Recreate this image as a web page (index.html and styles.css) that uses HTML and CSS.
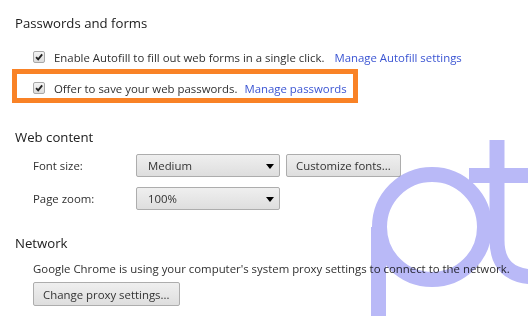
FILE: index.html
```html
<!DOCTYPE html>
<html lang="en">
<head>
<meta charset="UTF-8" />
<title>Settings</title>
<link rel="stylesheet" href="styles.css">
</head>
<body>
<div class="settings">
  <h3>Passwords and forms</h3>
  <div class="group checks">
    <div class="check-row">
      <span class="checkbox"><svg viewBox="0 0 12 12"><path d="M2.5 6.2 L5 8.8 L9.8 2.8" /></svg></span>
      <span>Enable Autofill to fill out web forms in a single click.</span>
      <a class="wide" href="#">Manage Autofill settings</a>
    </div>
    <div class="check-row marked">
      <span class="checkbox"><svg viewBox="0 0 12 12"><path d="M2.5 6.2 L5 8.8 L9.8 2.8" /></svg></span>
      <span>Offer to save your web passwords.</span>
      <a href="#">Manage passwords</a>
    </div>
  </div>

  <h3>Web content</h3>
  <div class="group fields">
    <div class="field-row">
      <label>Font size:</label>
      <div class="select">Medium<span class="arrow"></span></div>
      <button>Customize fonts...</button>
    </div>
    <div class="field-row">
      <label>Page zoom:</label>
      <div class="select">100%<span class="arrow"></span></div>
    </div>
  </div>

  <h3>Network</h3>
  <div class="group network">
    <p>Google Chrome is using your computer's system proxy settings to connect to the network.</p>
    <button>Change proxy settings...</button>
  </div>
</div>

<svg class="watermark" width="528" height="316" viewBox="0 0 528 316">
  <circle cx="432" cy="227" r="52.5" />
  <path d="M378.5 227 V330" />
  <path d="M497 140 V240 Q497 277 536 277" />
  <path d="M469 175.5 H540" />
</svg>
</body>
</html>
```

FILE: styles.css
```css
body {
  margin: 0;
  padding: 12px 0 0 15px;
  font-family: 'Open Sans', sans-serif;
  font-size: 11.4px;
  color: #303030;
  background-color: #fff;
  overflow: hidden;
}

h3 {
  margin: 0;
  font-size: 13.2px;
  font-weight: normal;
  line-height: 22px;
  color: #202020;
}

.group {
  padding-left: 18px;
}

.checks {
  margin: 11px 0 23px;
}

.fields {
  margin: 6px 0 22px;
}

.network {
  margin: 4px 0 0;
}

.check-row {
  display: flex;
  align-items: center;
  height: 24px;
  white-space: nowrap;
}

.check-row a {
  margin-left: 7px;
}

.check-row a.wide {
  margin-left: 10px;
}

a {
  color: #3b55d3;
  text-decoration: none;
}

.marked {
  width: fit-content;
  margin: 0 0 0 -21px;
  padding: 4px 6px 0 16px;
  border: 5px solid #f98226;
  height: 20px;
}

.checkbox {
  width: 12px;
  height: 12px;
  margin-right: 9px;
  border: 1px solid #a8a8a8;
  border-radius: 2px;
  background: linear-gradient(#f4f4f4, #dcdcdc);
  box-sizing: border-box;
  display: flex;
}

.checkbox svg {
  width: 10px;
  height: 10px;
  fill: none;
  stroke: #222;
  stroke-width: 2.2;
}

.field-row {
  display: flex;
  align-items: center;
  margin-bottom: 10px;
}

.field-row label {
  width: 103px;
}

.select, button {
  height: 23px;
  box-sizing: border-box;
  border: 1px solid #adadad;
  border-radius: 2px;
  background: linear-gradient(#efefef, #dedede);
  font-family: inherit;
  font-size: 11.4px;
  color: #333;
}

.select {
  width: 144px;
  display: flex;
  align-items: center;
  padding-left: 11px;
  position: relative;
}

.arrow {
  position: absolute;
  right: 5px;
  top: 9px;
  border-left: 4px solid transparent;
  border-right: 4px solid transparent;
  border-top: 5px solid #000;
}

button {
  margin-left: 6px;
  padding: 0 9px;
}

p {
  margin: 0 0 2px;
  line-height: 22px;
}

.network button {
  margin-left: 0;
  height: 24px;
  padding: 0 9px;
}

.watermark {
  position: absolute;
  left: 0;
  top: 0;
  pointer-events: none;
  mix-blend-mode: multiply;
  fill: none;
  stroke: #b9b9f7;
  stroke-width: 15;
}
```
